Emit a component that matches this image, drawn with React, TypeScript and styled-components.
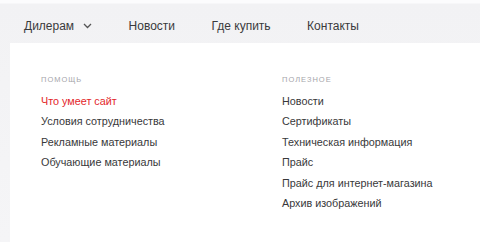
import React from "react"
import styled, { createGlobalStyle } from "styled-components"

const GlobalStyle = createGlobalStyle`
  html, body {
    margin: 0;
    padding: 0;
    background: #f4f4f6;
  }
  body {
    font-family: "Liberation Sans", Arial, sans-serif;
  }
`

const Page = styled.div`
  width: 480px;
  height: 242px;
  overflow: hidden;
  display: flex;
  flex-direction: column;
  background: linear-gradient(#fcfcfd 0, #fcfcfd 3px, #f2f2f4 4px, #f5f5f7 100%);
`

const Toolbar = styled.nav`
  height: 43px;
  box-sizing: border-box;
  padding: 8px 0 0 24px;
  display: flex;
  align-items: center;
`

const NavLink = styled.a`
  font-size: 12px;
  color: #3a3a3c;
  text-decoration: none;
  display: flex;
  align-items: center;
  gap: 9px;
  margin-right: 36.5px;
`

const Chevron = styled.svg`
  width: 9px;
  height: 6px;
`

const Dropdown = styled.div`
  flex: 1;
  margin-left: 10px;
  background: #fff;
  padding: 32px 0 0 31px;
  display: grid;
  grid-template-columns: 241px 1fr;
`

const Column = styled.div`
  display: flex;
  flex-direction: column;
`

const Heading = styled.div`
  font-size: 7.5px;
  letter-spacing: 1px;
  text-transform: uppercase;
  color: #a5a5aa;
  margin-bottom: 7px;
`

const MenuLink = styled.a<{ $active?: boolean }>`
  font-size: 10.8px;
  line-height: 20.4px;
  color: ${({ $active }) => ($active ? "#e3262b" : "#38383a")};
  text-decoration: none;
`

const help = [
  "Что умеет сайт",
  "Условия сотрудничества",
  "Рекламные материалы",
  "Обучающие материалы",
]

const useful = [
  "Новости",
  "Сертификаты",
  "Техническая информация",
  "Прайс",
  "Прайс для интернет-магазина",
  "Архив изображений",
]

export default function App() {
  return (
    <Page>
      <GlobalStyle />
      <Toolbar>
        <NavLink>
          Дилерам
          <Chevron viewBox="0 0 9 6">
            <path d="M1 1l3.5 3.5L8 1" fill="none" stroke="#555" strokeWidth="1.3" />
          </Chevron>
        </NavLink>
        <NavLink>Новости</NavLink>
        <NavLink>Где купить</NavLink>
        <NavLink>Контакты</NavLink>
      </Toolbar>
      <Dropdown>
        <Column>
          <Heading>Помощь</Heading>
          {help.map((t, i) => (
            <MenuLink key={t} $active={i === 0}>
              {t}
            </MenuLink>
          ))}
        </Column>
        <Column>
          <Heading>Полезное</Heading>
          {useful.map((t) => (
            <MenuLink key={t}>{t}</MenuLink>
          ))}
        </Column>
      </Dropdown>
    </Page>
  )
}
